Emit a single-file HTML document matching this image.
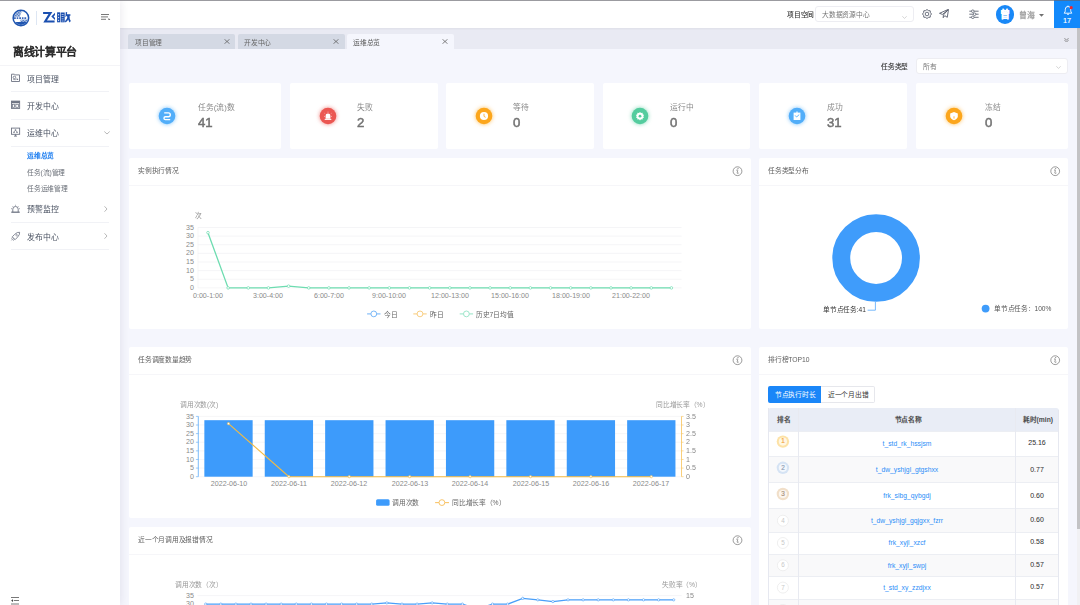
<!DOCTYPE html>
<html lang="zh-CN">
<head>
<meta charset="utf-8">
<style>
*{box-sizing:border-box;margin:0;padding:0}
html,body{width:1080px;height:605px;overflow:hidden;background:#f5f6fd;font-family:"Liberation Sans",sans-serif;color:#555}
.t{position:absolute;white-space:nowrap;line-height:1;transform-origin:0 0}
.r{position:absolute}
</style>
</head>
<body>

<div class="r" style="left:120.00px;top:27.80px;width:960.00px;height:21.10px;background:#e9eaf3;"></div>
<div class="r" style="left:128.40px;top:33.50px;width:107.00px;height:15.40px;background:#d4d9e4;border-radius:2px 2px 0 0"></div>
<div class="t" style="left:134.70px;top:38.73px;font-size:12.000px;color:#666;font-weight:400;transform:scale(0.5625);">项目管理</div>
<svg class="r" style="left:224.0px;top:39.2px;" width="6" height="5" viewBox="0 0 6 5"><path d="M.4 .2L5.6 4.8M5.6 .2L.4 4.8" stroke="#555" stroke-width=".7"/></svg>
<div class="r" style="left:237.50px;top:33.50px;width:107.00px;height:15.40px;background:#d4d9e4;border-radius:2px 2px 0 0"></div>
<div class="t" style="left:243.80px;top:38.73px;font-size:12.000px;color:#666;font-weight:400;transform:scale(0.5625);">开发中心</div>
<svg class="r" style="left:333.1px;top:39.2px;" width="6" height="5" viewBox="0 0 6 5"><path d="M.4 .2L5.6 4.8M5.6 .2L.4 4.8" stroke="#555" stroke-width=".7"/></svg>
<div class="r" style="left:346.70px;top:33.50px;width:107.00px;height:15.40px;background:#f5f6fd;border-radius:2px 2px 0 0"></div>
<div class="t" style="left:353.00px;top:38.73px;font-size:12.000px;color:#555;font-weight:400;transform:scale(0.5625);">运维总览</div>
<svg class="r" style="left:442.29999999999995px;top:39.2px;" width="6" height="5" viewBox="0 0 6 5"><path d="M.4 .2L5.6 4.8M5.6 .2L.4 4.8" stroke="#555" stroke-width=".7"/></svg>
<svg class="r" style="left:1063.6px;top:37.7px;" width="5" height="4.5" viewBox="0 0 5 4.5"><path d="M.4 .4L2.5 1.9 4.6 .4M.4 2.3L2.5 3.8 4.6 2.3" stroke="#707070" stroke-width=".75" fill="none"/></svg>
<div class="t" style="left:880.90px;top:63.42px;font-size:12.000px;color:#333;font-weight:400;transform:scale(0.5625);-webkit-text-stroke:.2px #333">任务类型</div>
<div class="r" style="left:916.10px;top:57.80px;width:151.50px;height:16.20px;background:#fff;border:1px solid #ededf2;border-radius:3px"></div>
<div class="t" style="left:923.00px;top:63.03px;font-size:12.000px;color:#777;font-weight:400;transform:scale(0.5625);">所有</div>
<svg class="r" style="left:1055.8px;top:65.6px;" width="5" height="3" viewBox="0 0 5 3"><path d="M.3 .3L2.5 2.4 4.7 .3" stroke="#bbb" stroke-width=".6" fill="none"/></svg>
<div class="r" style="left:129.20px;top:83.30px;width:152.00px;height:65.50px;background:#fff;border-radius:2px"></div>
<svg class="r" style="left:155.8px;top:105.3px;overflow:visible" width="22" height="22" viewBox="-11 -11 22 22"><circle r="8.3" fill="#52aef9" style="filter:drop-shadow(0 0 2.2px #52aef9bb)"/><path d="M-2.8 -3.1H1.4A1.9 1.9 0 0 1 1.4 0.7H-1.6A1.45 1.45 0 0 0 -1.6 3.6H3.2" stroke="#fff" stroke-width="1.35" fill="none"/></svg>
<div class="t" style="left:197.60px;top:103.70px;font-size:13.867px;color:#8a8a8a;font-weight:400;transform:scale(0.5625);">任务(流)数</div>
<div class="t" style="left:197.80px;top:115.93px;font-size:23.467px;color:#737373;font-weight:400;transform:scale(0.5625);-webkit-text-stroke:.9px #737373">41</div>
<div class="r" style="left:290.00px;top:83.30px;width:147.60px;height:65.50px;background:#fff;border-radius:2px"></div>
<svg class="r" style="left:316.6px;top:105.3px;overflow:visible" width="22" height="22" viewBox="-11 -11 22 22"><circle r="8.3" fill="#eb5752" style="filter:drop-shadow(0 0 2.2px #eb5752bb)"/><path d="M-2.4 -0.2A2.4 2.4 0 0 1 2.4 -0.2V2.8H-2.4Z" fill="#fff"/><path d="M-3.3 3.4H3.3" stroke="#fff" stroke-width="1"/><path d="M0 -4.3V-3.4M-3.4 -2.6L-2.8 -2.1M3.4 -2.6L2.8 -2.1M-4 0.4H-3.2M4 0.4H3.2" stroke="#fff" stroke-width=".6"/></svg>
<div class="t" style="left:357.20px;top:103.70px;font-size:13.867px;color:#8a8a8a;font-weight:400;transform:scale(0.5625);">失败</div>
<div class="t" style="left:357.40px;top:115.93px;font-size:23.467px;color:#737373;font-weight:400;transform:scale(0.5625);-webkit-text-stroke:.9px #737373">2</div>
<div class="r" style="left:445.90px;top:83.30px;width:148.00px;height:65.50px;background:#fff;border-radius:2px"></div>
<svg class="r" style="left:472.5px;top:105.3px;overflow:visible" width="22" height="22" viewBox="-11 -11 22 22"><circle r="8.3" fill="#fca61c" style="filter:drop-shadow(0 0 2.2px #fca61cbb)"/><circle cx="0" cy="0" r="4.1" fill="#fff"/><path d="M0 -2.3V0.4L1.6 1.3" stroke="#fca61c" stroke-width=".8" fill="none"/></svg>
<div class="t" style="left:513.10px;top:103.70px;font-size:13.867px;color:#8a8a8a;font-weight:400;transform:scale(0.5625);">等待</div>
<div class="t" style="left:513.30px;top:115.93px;font-size:23.467px;color:#737373;font-weight:400;transform:scale(0.5625);-webkit-text-stroke:.9px #737373">0</div>
<div class="r" style="left:602.80px;top:83.30px;width:147.60px;height:65.50px;background:#fff;border-radius:2px"></div>
<svg class="r" style="left:629.4px;top:105.3px;overflow:visible" width="22" height="22" viewBox="-11 -11 22 22"><circle r="8.3" fill="#54cc9e" style="filter:drop-shadow(0 0 2.2px #54cc9ebb)"/><path d="M0 -4.1L1 -3 2.6 -3.3 2.7 -1.8 4.1 -1 3.2 0.2 4.1 1.4 2.7 2 2.6 3.5 1 3.3 0 4.4 -1 3.3 -2.6 3.5 -2.7 2 -4.1 1.4 -3.2 0.2 -4.1 -1 -2.7 -1.8 -2.6 -3.3 -1 -3Z" fill="#fff"/><circle cx="0" cy="0.2" r="1.4" fill="#54cc9e"/></svg>
<div class="t" style="left:670.00px;top:103.70px;font-size:13.867px;color:#8a8a8a;font-weight:400;transform:scale(0.5625);">运行中</div>
<div class="t" style="left:670.20px;top:115.93px;font-size:23.467px;color:#737373;font-weight:400;transform:scale(0.5625);-webkit-text-stroke:.9px #737373">0</div>
<div class="r" style="left:759.30px;top:83.30px;width:147.60px;height:65.50px;background:#fff;border-radius:2px"></div>
<svg class="r" style="left:785.9px;top:105.3px;overflow:visible" width="22" height="22" viewBox="-11 -11 22 22"><circle r="8.3" fill="#52aef9" style="filter:drop-shadow(0 0 2.2px #52aef9bb)"/><rect x="-3.4" y="-3.4" width="6.8" height="7.4" fill="#fff"/><path d="M0 -4.5V-2.6" stroke="#fff" stroke-width="1.2"/><path d="M-1.9 -0.6L-0.4 1 2.2 -1.4" stroke="#52aef9" stroke-width=".9" fill="none"/></svg>
<div class="t" style="left:826.50px;top:103.70px;font-size:13.867px;color:#8a8a8a;font-weight:400;transform:scale(0.5625);">成功</div>
<div class="t" style="left:826.70px;top:115.93px;font-size:23.467px;color:#737373;font-weight:400;transform:scale(0.5625);-webkit-text-stroke:.9px #737373">31</div>
<div class="r" style="left:916.10px;top:83.30px;width:152.00px;height:65.50px;background:#fff;border-radius:2px"></div>
<svg class="r" style="left:942.7px;top:105.3px;overflow:visible" width="22" height="22" viewBox="-11 -11 22 22"><circle r="8.3" fill="#fca61c" style="filter:drop-shadow(0 0 2.2px #fca61cbb)"/><path d="M-3.8 -2.6L0 -4 3.8 -2.6V0.2Q3.8 2.8 0 4.3 -3.8 2.8 -3.8 0.2Z" fill="#fff"/><path d="M0 0.3V2.6" stroke="#fca61c" stroke-width=".8"/></svg>
<div class="t" style="left:984.50px;top:103.70px;font-size:13.867px;color:#8a8a8a;font-weight:400;transform:scale(0.5625);">冻结</div>
<div class="t" style="left:984.70px;top:115.93px;font-size:23.467px;color:#737373;font-weight:400;transform:scale(0.5625);-webkit-text-stroke:.9px #737373">0</div>
<div class="r" style="left:129.10px;top:158.00px;width:621.60px;height:170.70px;background:#fff;border-radius:2px"></div>
<div class="r" style="left:129.10px;top:185.20px;width:621.60px;height:0.80px;background:#f6f6f9;"></div>
<div class="t" style="left:137.80px;top:167.43px;font-size:12.000px;color:#606060;font-weight:400;transform:scale(0.5625);">实例执行情况</div>
<div class="r" style="left:759.30px;top:158.00px;width:308.80px;height:170.70px;background:#fff;border-radius:2px"></div>
<div class="r" style="left:759.30px;top:185.20px;width:308.80px;height:0.80px;background:#f6f6f9;"></div>
<div class="t" style="left:768.00px;top:167.43px;font-size:12.000px;color:#606060;font-weight:400;transform:scale(0.5625);">任务类型分布</div>
<div class="r" style="left:129.10px;top:347.00px;width:621.60px;height:170.70px;background:#fff;border-radius:2px"></div>
<div class="r" style="left:129.10px;top:374.20px;width:621.60px;height:0.80px;background:#f6f6f9;"></div>
<div class="t" style="left:137.80px;top:356.43px;font-size:12.000px;color:#606060;font-weight:400;transform:scale(0.5625);">任务调度数量趋势</div>
<div class="r" style="left:759.30px;top:347.00px;width:308.80px;height:300.00px;background:#fff;border-radius:2px"></div>
<div class="r" style="left:759.30px;top:374.20px;width:308.80px;height:0.80px;background:#f6f6f9;"></div>
<div class="t" style="left:768.00px;top:356.43px;font-size:12.000px;color:#606060;font-weight:400;transform:scale(0.5625);">排行榜TOP10</div>
<div class="r" style="left:129.10px;top:527.00px;width:621.60px;height:170.70px;background:#fff;border-radius:2px"></div>
<div class="r" style="left:129.10px;top:554.20px;width:621.60px;height:0.80px;background:#f6f6f9;"></div>
<div class="t" style="left:137.80px;top:536.42px;font-size:12.000px;color:#606060;font-weight:400;transform:scale(0.5625);">近一个月调用及报错情况</div>
<div class="t" style="left:194.10px;top:283.92px;font-size:12.622px;color:#8a8a8a;font-weight:400;transform:scale(0.5625) translateX(-100%);">0</div>
<div class="t" style="left:194.10px;top:275.29px;font-size:12.622px;color:#8a8a8a;font-weight:400;transform:scale(0.5625) translateX(-100%);">5</div>
<div class="t" style="left:194.10px;top:266.66px;font-size:12.622px;color:#8a8a8a;font-weight:400;transform:scale(0.5625) translateX(-100%);">10</div>
<div class="t" style="left:194.10px;top:258.04px;font-size:12.622px;color:#8a8a8a;font-weight:400;transform:scale(0.5625) translateX(-100%);">15</div>
<div class="t" style="left:194.10px;top:249.41px;font-size:12.622px;color:#8a8a8a;font-weight:400;transform:scale(0.5625) translateX(-100%);">20</div>
<div class="t" style="left:194.10px;top:240.78px;font-size:12.622px;color:#8a8a8a;font-weight:400;transform:scale(0.5625) translateX(-100%);">25</div>
<div class="t" style="left:194.10px;top:232.15px;font-size:12.622px;color:#8a8a8a;font-weight:400;transform:scale(0.5625) translateX(-100%);">30</div>
<div class="t" style="left:194.10px;top:223.52px;font-size:12.622px;color:#8a8a8a;font-weight:400;transform:scale(0.5625) translateX(-100%);">35</div>
<div class="t" style="left:195.00px;top:211.82px;font-size:12.000px;color:#8a8a8a;font-weight:400;transform:scale(0.5625);">次</div>
<div class="t" style="left:207.97px;top:291.52px;font-size:12.622px;color:#8a8a8a;font-weight:400;transform:scale(0.5625) translateX(-50%);">0:00-1:00</div>
<div class="t" style="left:268.43px;top:291.52px;font-size:12.622px;color:#8a8a8a;font-weight:400;transform:scale(0.5625) translateX(-50%);">3:00-4:00</div>
<div class="t" style="left:328.88px;top:291.52px;font-size:12.622px;color:#8a8a8a;font-weight:400;transform:scale(0.5625) translateX(-50%);">6:00-7:00</div>
<div class="t" style="left:389.33px;top:291.52px;font-size:12.622px;color:#8a8a8a;font-weight:400;transform:scale(0.5625) translateX(-50%);">9:00-10:00</div>
<div class="t" style="left:449.78px;top:291.52px;font-size:12.622px;color:#8a8a8a;font-weight:400;transform:scale(0.5625) translateX(-50%);">12:00-13:00</div>
<div class="t" style="left:510.23px;top:291.52px;font-size:12.622px;color:#8a8a8a;font-weight:400;transform:scale(0.5625) translateX(-50%);">15:00-16:00</div>
<div class="t" style="left:570.68px;top:291.52px;font-size:12.622px;color:#8a8a8a;font-weight:400;transform:scale(0.5625) translateX(-50%);">18:00-19:00</div>
<div class="t" style="left:631.12px;top:291.52px;font-size:12.622px;color:#8a8a8a;font-weight:400;transform:scale(0.5625) translateX(-50%);">21:00-22:00</div>
<div class="t" style="left:383.70px;top:310.52px;font-size:12.000px;color:#666;font-weight:400;transform:scale(0.5625);">今日</div>
<div class="t" style="left:429.60px;top:310.52px;font-size:12.000px;color:#666;font-weight:400;transform:scale(0.5625);">昨日</div>
<div class="t" style="left:476.30px;top:310.52px;font-size:12.000px;color:#666;font-weight:400;transform:scale(0.5625);">历史7日均值</div>
<div class="t" style="left:822.70px;top:306.10px;font-size:11.733px;color:#333;font-weight:400;transform:scale(0.5625);">单节点任务:41</div>
<div class="t" style="left:994.00px;top:305.10px;font-size:11.733px;color:#555;font-weight:400;transform:scale(0.5625);">单节点任务：100%</div>
<div class="t" style="left:193.90px;top:472.82px;font-size:12.622px;color:#8a8a8a;font-weight:400;transform:scale(0.5625) translateX(-100%);">0</div>
<div class="t" style="left:686.20px;top:472.82px;font-size:12.622px;color:#8a8a8a;font-weight:400;transform:scale(0.5625);">0</div>
<div class="t" style="left:193.90px;top:464.21px;font-size:12.622px;color:#8a8a8a;font-weight:400;transform:scale(0.5625) translateX(-100%);">5</div>
<div class="t" style="left:686.20px;top:464.21px;font-size:12.622px;color:#8a8a8a;font-weight:400;transform:scale(0.5625);">0.5</div>
<div class="t" style="left:193.90px;top:455.59px;font-size:12.622px;color:#8a8a8a;font-weight:400;transform:scale(0.5625) translateX(-100%);">10</div>
<div class="t" style="left:686.20px;top:455.59px;font-size:12.622px;color:#8a8a8a;font-weight:400;transform:scale(0.5625);">1</div>
<div class="t" style="left:193.90px;top:446.98px;font-size:12.622px;color:#8a8a8a;font-weight:400;transform:scale(0.5625) translateX(-100%);">15</div>
<div class="t" style="left:686.20px;top:446.98px;font-size:12.622px;color:#8a8a8a;font-weight:400;transform:scale(0.5625);">1.5</div>
<div class="t" style="left:193.90px;top:438.36px;font-size:12.622px;color:#8a8a8a;font-weight:400;transform:scale(0.5625) translateX(-100%);">20</div>
<div class="t" style="left:686.20px;top:438.36px;font-size:12.622px;color:#8a8a8a;font-weight:400;transform:scale(0.5625);">2</div>
<div class="t" style="left:193.90px;top:429.75px;font-size:12.622px;color:#8a8a8a;font-weight:400;transform:scale(0.5625) translateX(-100%);">25</div>
<div class="t" style="left:686.20px;top:429.75px;font-size:12.622px;color:#8a8a8a;font-weight:400;transform:scale(0.5625);">2.5</div>
<div class="t" style="left:193.90px;top:421.14px;font-size:12.622px;color:#8a8a8a;font-weight:400;transform:scale(0.5625) translateX(-100%);">30</div>
<div class="t" style="left:686.20px;top:421.14px;font-size:12.622px;color:#8a8a8a;font-weight:400;transform:scale(0.5625);">3</div>
<div class="t" style="left:193.90px;top:412.52px;font-size:12.622px;color:#8a8a8a;font-weight:400;transform:scale(0.5625) translateX(-100%);">35</div>
<div class="t" style="left:686.20px;top:412.52px;font-size:12.622px;color:#8a8a8a;font-weight:400;transform:scale(0.5625);">3.5</div>
<div class="t" style="left:179.70px;top:401.43px;font-size:12.000px;color:#999;font-weight:400;transform:scale(0.5625);">调用次数(次)</div>
<div class="t" style="left:655.50px;top:401.43px;font-size:12.000px;color:#999;font-weight:400;transform:scale(0.5625);">同比增长率（%）</div>
<div class="t" style="left:228.50px;top:479.92px;font-size:12.622px;color:#8a8a8a;font-weight:400;transform:scale(0.5625) translateX(-50%);">2022-06-10</div>
<div class="t" style="left:288.90px;top:479.92px;font-size:12.622px;color:#8a8a8a;font-weight:400;transform:scale(0.5625) translateX(-50%);">2022-06-11</div>
<div class="t" style="left:349.30px;top:479.92px;font-size:12.622px;color:#8a8a8a;font-weight:400;transform:scale(0.5625) translateX(-50%);">2022-06-12</div>
<div class="t" style="left:409.70px;top:479.92px;font-size:12.622px;color:#8a8a8a;font-weight:400;transform:scale(0.5625) translateX(-50%);">2022-06-13</div>
<div class="t" style="left:470.10px;top:479.92px;font-size:12.622px;color:#8a8a8a;font-weight:400;transform:scale(0.5625) translateX(-50%);">2022-06-14</div>
<div class="t" style="left:530.50px;top:479.92px;font-size:12.622px;color:#8a8a8a;font-weight:400;transform:scale(0.5625) translateX(-50%);">2022-06-15</div>
<div class="t" style="left:590.90px;top:479.92px;font-size:12.622px;color:#8a8a8a;font-weight:400;transform:scale(0.5625) translateX(-50%);">2022-06-16</div>
<div class="t" style="left:651.30px;top:479.92px;font-size:12.622px;color:#8a8a8a;font-weight:400;transform:scale(0.5625) translateX(-50%);">2022-06-17</div>
<div class="t" style="left:392.40px;top:499.32px;font-size:12.000px;color:#666;font-weight:400;transform:scale(0.5625);">调用次数</div>
<div class="t" style="left:451.80px;top:499.32px;font-size:12.000px;color:#666;font-weight:400;transform:scale(0.5625);">同比增长率（%）</div>
<div class="t" style="left:175.20px;top:581.38px;font-size:12.000px;color:#999;font-weight:400;transform:scale(0.5625);">调用次数（次）</div>
<div class="t" style="left:661.90px;top:581.38px;font-size:12.000px;color:#999;font-weight:400;transform:scale(0.5625);">失败率（%）</div>
<div class="t" style="left:194.00px;top:591.92px;font-size:12.622px;color:#8a8a8a;font-weight:400;transform:scale(0.5625) translateX(-100%);">35</div>
<div class="t" style="left:194.00px;top:600.22px;font-size:12.622px;color:#8a8a8a;font-weight:400;transform:scale(0.5625) translateX(-100%);">30</div>
<div class="t" style="left:686.30px;top:592.32px;font-size:12.622px;color:#8a8a8a;font-weight:400;transform:scale(0.5625);">15</div>
<svg class="r" style="left:0;top:0" width="1080" height="605" viewBox="0 0 1080 605"><circle cx="737.5" cy="171.2" r="4.4" fill="none" stroke="#7a7a7a" stroke-width=".75"/><path d="M736.3 170.29999999999998Q737.8 169.2 737.7 170.6L737.1 173.1Q737.3 173.89999999999998 738.7 173.0" fill="none" stroke="#7a7a7a" stroke-width=".75"/><circle cx="738.0" cy="168.6" r=".55" fill="#7a7a7a"/><circle cx="1055.2" cy="171.2" r="4.4" fill="none" stroke="#7a7a7a" stroke-width=".75"/><path d="M1054.0 170.29999999999998Q1055.5 169.2 1055.4 170.6L1054.8 173.1Q1055.0 173.89999999999998 1056.4 173.0" fill="none" stroke="#7a7a7a" stroke-width=".75"/><circle cx="1055.7" cy="168.6" r=".55" fill="#7a7a7a"/><circle cx="737.5" cy="360.2" r="4.4" fill="none" stroke="#7a7a7a" stroke-width=".75"/><path d="M736.3 359.3Q737.8 358.2 737.7 359.59999999999997L737.1 362.09999999999997Q737.3 362.9 738.7 362.0" fill="none" stroke="#7a7a7a" stroke-width=".75"/><circle cx="738.0" cy="357.59999999999997" r=".55" fill="#7a7a7a"/><circle cx="1055.2" cy="360.2" r="4.4" fill="none" stroke="#7a7a7a" stroke-width=".75"/><path d="M1054.0 359.3Q1055.5 358.2 1055.4 359.59999999999997L1054.8 362.09999999999997Q1055.0 362.9 1056.4 362.0" fill="none" stroke="#7a7a7a" stroke-width=".75"/><circle cx="1055.7" cy="357.59999999999997" r=".55" fill="#7a7a7a"/><circle cx="737.5" cy="540.2" r="4.4" fill="none" stroke="#7a7a7a" stroke-width=".75"/><path d="M736.3 539.3000000000001Q737.8 538.2 737.7 539.6L737.1 542.1Q737.3 542.9000000000001 738.7 542.0" fill="none" stroke="#7a7a7a" stroke-width=".75"/><circle cx="738.0" cy="537.6" r=".55" fill="#7a7a7a"/><line x1="197.9" x2="681.5" y1="287.90" y2="287.90" stroke="#efeff2" stroke-width=".6"/><line x1="197.9" x2="681.5" y1="279.27" y2="279.27" stroke="#efeff2" stroke-width=".6"/><line x1="197.9" x2="681.5" y1="270.64" y2="270.64" stroke="#efeff2" stroke-width=".6"/><line x1="197.9" x2="681.5" y1="262.01" y2="262.01" stroke="#efeff2" stroke-width=".6"/><line x1="197.9" x2="681.5" y1="253.39" y2="253.39" stroke="#efeff2" stroke-width=".6"/><line x1="197.9" x2="681.5" y1="244.76" y2="244.76" stroke="#efeff2" stroke-width=".6"/><line x1="197.9" x2="681.5" y1="236.13" y2="236.13" stroke="#efeff2" stroke-width=".6"/><line x1="197.9" x2="681.5" y1="227.50" y2="227.50" stroke="#efeff2" stroke-width=".6"/><line x1="198" x2="198" y1="227.5" y2="287.9" stroke="#f2f2f4" stroke-width=".6"/><polyline points="207.97,232.68 228.12,287.90 248.28,287.90 268.43,287.90 288.58,286.17 308.73,287.90 328.88,287.90 349.03,287.90 369.18,287.90 389.33,287.90 409.48,287.90 429.62,287.90 449.78,287.90 469.93,287.90 490.08,287.90 510.23,287.90 530.38,287.90 550.53,287.90 570.68,287.90 590.83,287.90 610.98,287.90 631.12,287.90 651.28,287.90 671.43,287.90" fill="none" stroke="#6ddcb0" stroke-width="1.3"/><circle cx="207.97" cy="232.68" r="1.3" fill="#fff" stroke="#6ddcb0" stroke-width=".7"/><circle cx="228.12" cy="287.90" r="1.3" fill="#fff" stroke="#6ddcb0" stroke-width=".7"/><circle cx="248.28" cy="287.90" r="1.3" fill="#fff" stroke="#6ddcb0" stroke-width=".7"/><circle cx="268.43" cy="287.90" r="1.3" fill="#fff" stroke="#6ddcb0" stroke-width=".7"/><circle cx="288.58" cy="286.17" r="1.3" fill="#fff" stroke="#6ddcb0" stroke-width=".7"/><circle cx="308.73" cy="287.90" r="1.3" fill="#fff" stroke="#6ddcb0" stroke-width=".7"/><circle cx="328.88" cy="287.90" r="1.3" fill="#fff" stroke="#6ddcb0" stroke-width=".7"/><circle cx="349.03" cy="287.90" r="1.3" fill="#fff" stroke="#6ddcb0" stroke-width=".7"/><circle cx="369.18" cy="287.90" r="1.3" fill="#fff" stroke="#6ddcb0" stroke-width=".7"/><circle cx="389.33" cy="287.90" r="1.3" fill="#fff" stroke="#6ddcb0" stroke-width=".7"/><circle cx="409.48" cy="287.90" r="1.3" fill="#fff" stroke="#6ddcb0" stroke-width=".7"/><circle cx="429.62" cy="287.90" r="1.3" fill="#fff" stroke="#6ddcb0" stroke-width=".7"/><circle cx="449.78" cy="287.90" r="1.3" fill="#fff" stroke="#6ddcb0" stroke-width=".7"/><circle cx="469.93" cy="287.90" r="1.3" fill="#fff" stroke="#6ddcb0" stroke-width=".7"/><circle cx="490.08" cy="287.90" r="1.3" fill="#fff" stroke="#6ddcb0" stroke-width=".7"/><circle cx="510.23" cy="287.90" r="1.3" fill="#fff" stroke="#6ddcb0" stroke-width=".7"/><circle cx="530.38" cy="287.90" r="1.3" fill="#fff" stroke="#6ddcb0" stroke-width=".7"/><circle cx="550.53" cy="287.90" r="1.3" fill="#fff" stroke="#6ddcb0" stroke-width=".7"/><circle cx="570.68" cy="287.90" r="1.3" fill="#fff" stroke="#6ddcb0" stroke-width=".7"/><circle cx="590.83" cy="287.90" r="1.3" fill="#fff" stroke="#6ddcb0" stroke-width=".7"/><circle cx="610.98" cy="287.90" r="1.3" fill="#fff" stroke="#6ddcb0" stroke-width=".7"/><circle cx="631.12" cy="287.90" r="1.3" fill="#fff" stroke="#6ddcb0" stroke-width=".7"/><circle cx="651.28" cy="287.90" r="1.3" fill="#fff" stroke="#6ddcb0" stroke-width=".7"/><circle cx="671.43" cy="287.90" r="1.3" fill="#fff" stroke="#6ddcb0" stroke-width=".7"/><line x1="367.1" x2="380.5" y1="313.9" y2="313.9" stroke="#7ab8f8" stroke-width="1.1"/><circle cx="373.8" cy="313.9" r="2.9" fill="#fff" stroke="#7ab8f8" stroke-width="1"/><line x1="413.3" x2="426.7" y1="313.9" y2="313.9" stroke="#f9cf84" stroke-width="1.1"/><circle cx="420" cy="313.9" r="2.9" fill="#fff" stroke="#f9cf84" stroke-width="1"/><line x1="459.7" x2="473.09999999999997" y1="313.9" y2="313.9" stroke="#9ee6cb" stroke-width="1.1"/><circle cx="466.4" cy="313.9" r="2.9" fill="#fff" stroke="#9ee6cb" stroke-width="1"/><circle cx="876.1" cy="258" r="34.85" fill="none" stroke="#3f9cfb" stroke-width="17.9"/><path d="M875.4 302V310.2H867.6" fill="none" stroke="#3f9cfb" stroke-width=".7"/><circle cx="985.6" cy="308.6" r="3.9" fill="#3f9cfb"/><line x1="198.3" x2="681.5" y1="476.70" y2="476.70" stroke="#f0f0f2" stroke-width=".6"/><line x1="195.9" x2="198.3" y1="476.70" y2="476.70" stroke="#5aa9f8" stroke-width=".6"/><line x1="681.5" x2="683.6" y1="476.70" y2="476.70" stroke="#f7c35a" stroke-width=".6"/><line x1="198.3" x2="681.5" y1="468.09" y2="468.09" stroke="#f0f0f2" stroke-width=".6"/><line x1="195.9" x2="198.3" y1="468.09" y2="468.09" stroke="#5aa9f8" stroke-width=".6"/><line x1="681.5" x2="683.6" y1="468.09" y2="468.09" stroke="#f7c35a" stroke-width=".6"/><line x1="198.3" x2="681.5" y1="459.47" y2="459.47" stroke="#f0f0f2" stroke-width=".6"/><line x1="195.9" x2="198.3" y1="459.47" y2="459.47" stroke="#5aa9f8" stroke-width=".6"/><line x1="681.5" x2="683.6" y1="459.47" y2="459.47" stroke="#f7c35a" stroke-width=".6"/><line x1="198.3" x2="681.5" y1="450.86" y2="450.86" stroke="#f0f0f2" stroke-width=".6"/><line x1="195.9" x2="198.3" y1="450.86" y2="450.86" stroke="#5aa9f8" stroke-width=".6"/><line x1="681.5" x2="683.6" y1="450.86" y2="450.86" stroke="#f7c35a" stroke-width=".6"/><line x1="198.3" x2="681.5" y1="442.24" y2="442.24" stroke="#f0f0f2" stroke-width=".6"/><line x1="195.9" x2="198.3" y1="442.24" y2="442.24" stroke="#5aa9f8" stroke-width=".6"/><line x1="681.5" x2="683.6" y1="442.24" y2="442.24" stroke="#f7c35a" stroke-width=".6"/><line x1="198.3" x2="681.5" y1="433.63" y2="433.63" stroke="#f0f0f2" stroke-width=".6"/><line x1="195.9" x2="198.3" y1="433.63" y2="433.63" stroke="#5aa9f8" stroke-width=".6"/><line x1="681.5" x2="683.6" y1="433.63" y2="433.63" stroke="#f7c35a" stroke-width=".6"/><line x1="198.3" x2="681.5" y1="425.01" y2="425.01" stroke="#f0f0f2" stroke-width=".6"/><line x1="195.9" x2="198.3" y1="425.01" y2="425.01" stroke="#5aa9f8" stroke-width=".6"/><line x1="681.5" x2="683.6" y1="425.01" y2="425.01" stroke="#f7c35a" stroke-width=".6"/><line x1="198.3" x2="681.5" y1="416.40" y2="416.40" stroke="#f0f0f2" stroke-width=".6"/><line x1="195.9" x2="198.3" y1="416.40" y2="416.40" stroke="#5aa9f8" stroke-width=".6"/><line x1="681.5" x2="683.6" y1="416.40" y2="416.40" stroke="#f7c35a" stroke-width=".6"/><line x1="198.3" x2="198.3" y1="416.4" y2="476.7" stroke="#5aa9f8" stroke-width=".8"/><line x1="681.5" x2="681.5" y1="416.4" y2="476.7" stroke="#f7c35a" stroke-width=".8"/><rect x="204.35" y="420.19" width="48.3" height="56.51" fill="#3d9bfb"/><rect x="264.75" y="420.19" width="48.3" height="56.51" fill="#3d9bfb"/><rect x="325.15" y="420.19" width="48.3" height="56.51" fill="#3d9bfb"/><rect x="385.55" y="420.19" width="48.3" height="56.51" fill="#3d9bfb"/><rect x="445.95" y="420.19" width="48.3" height="56.51" fill="#3d9bfb"/><rect x="506.35" y="420.19" width="48.3" height="56.51" fill="#3d9bfb"/><rect x="566.75" y="420.19" width="48.3" height="56.51" fill="#3d9bfb"/><rect x="627.15" y="420.19" width="48.3" height="56.51" fill="#3d9bfb"/><polyline points="228.50,423.64 288.90,476.70 349.30,476.70 409.70,476.70 470.10,476.70 530.50,476.70 590.90,476.70 651.30,476.70" fill="none" stroke="#f5bb40" stroke-width="1.1"/><circle cx="228.50" cy="423.64" r="1.15" fill="#fff" stroke="#f5bb40" stroke-width=".6"/><circle cx="288.90" cy="476.70" r="1.15" fill="#fff" stroke="#f5bb40" stroke-width=".6"/><circle cx="349.30" cy="476.70" r="1.15" fill="#fff" stroke="#f5bb40" stroke-width=".6"/><circle cx="409.70" cy="476.70" r="1.15" fill="#fff" stroke="#f5bb40" stroke-width=".6"/><circle cx="470.10" cy="476.70" r="1.15" fill="#fff" stroke="#f5bb40" stroke-width=".6"/><circle cx="530.50" cy="476.70" r="1.15" fill="#fff" stroke="#f5bb40" stroke-width=".6"/><circle cx="590.90" cy="476.70" r="1.15" fill="#fff" stroke="#f5bb40" stroke-width=".6"/><circle cx="651.30" cy="476.70" r="1.15" fill="#fff" stroke="#f5bb40" stroke-width=".6"/><rect x="376.1" y="499.3" width="13.5" height="6.5" rx="1.5" fill="#3d9bfb"/><line x1="435.1" x2="449" y1="502.6" y2="502.6" stroke="#f9c56a" stroke-width="1.1"/><circle cx="441.9" cy="502.6" r="2.9" fill="#fff" stroke="#f9c56a" stroke-width="1"/><line x1="197.4" x2="681.7" y1="595.6" y2="595.6" stroke="#efeff2" stroke-width=".6"/><polyline points="205.70,604.10 220.80,604.10 235.89,604.10 250.99,604.10 266.09,604.10 281.18,604.10 296.28,604.10 311.38,604.10 326.47,604.10 341.57,604.10 356.67,604.10 371.76,604.10 386.86,602.91 401.96,604.10 417.05,604.10 432.15,602.91 447.25,604.10 462.35,604.10 477.44,609.20 492.54,604.10 507.64,604.10 522.73,598.32 537.83,599.85 552.93,601.55 568.02,599.85 583.12,599.85 598.22,599.85 613.31,599.85 628.41,599.85 643.51,599.85 658.60,599.85 673.70,599.85" fill="none" stroke="#4a9ff9" stroke-width="1.35"/><circle cx="205.70" cy="604.10" r="1.15" fill="#fff" stroke="#4a9ff9" stroke-width=".6"/><circle cx="220.80" cy="604.10" r="1.15" fill="#fff" stroke="#4a9ff9" stroke-width=".6"/><circle cx="235.89" cy="604.10" r="1.15" fill="#fff" stroke="#4a9ff9" stroke-width=".6"/><circle cx="250.99" cy="604.10" r="1.15" fill="#fff" stroke="#4a9ff9" stroke-width=".6"/><circle cx="266.09" cy="604.10" r="1.15" fill="#fff" stroke="#4a9ff9" stroke-width=".6"/><circle cx="281.18" cy="604.10" r="1.15" fill="#fff" stroke="#4a9ff9" stroke-width=".6"/><circle cx="296.28" cy="604.10" r="1.15" fill="#fff" stroke="#4a9ff9" stroke-width=".6"/><circle cx="311.38" cy="604.10" r="1.15" fill="#fff" stroke="#4a9ff9" stroke-width=".6"/><circle cx="326.47" cy="604.10" r="1.15" fill="#fff" stroke="#4a9ff9" stroke-width=".6"/><circle cx="341.57" cy="604.10" r="1.15" fill="#fff" stroke="#4a9ff9" stroke-width=".6"/><circle cx="356.67" cy="604.10" r="1.15" fill="#fff" stroke="#4a9ff9" stroke-width=".6"/><circle cx="371.76" cy="604.10" r="1.15" fill="#fff" stroke="#4a9ff9" stroke-width=".6"/><circle cx="386.86" cy="602.91" r="1.15" fill="#fff" stroke="#4a9ff9" stroke-width=".6"/><circle cx="401.96" cy="604.10" r="1.15" fill="#fff" stroke="#4a9ff9" stroke-width=".6"/><circle cx="417.05" cy="604.10" r="1.15" fill="#fff" stroke="#4a9ff9" stroke-width=".6"/><circle cx="432.15" cy="602.91" r="1.15" fill="#fff" stroke="#4a9ff9" stroke-width=".6"/><circle cx="447.25" cy="604.10" r="1.15" fill="#fff" stroke="#4a9ff9" stroke-width=".6"/><circle cx="462.35" cy="604.10" r="1.15" fill="#fff" stroke="#4a9ff9" stroke-width=".6"/><circle cx="477.44" cy="609.20" r="1.15" fill="#fff" stroke="#4a9ff9" stroke-width=".6"/><circle cx="492.54" cy="604.10" r="1.15" fill="#fff" stroke="#4a9ff9" stroke-width=".6"/><circle cx="507.64" cy="604.10" r="1.15" fill="#fff" stroke="#4a9ff9" stroke-width=".6"/><circle cx="522.73" cy="598.32" r="1.15" fill="#fff" stroke="#4a9ff9" stroke-width=".6"/><circle cx="537.83" cy="599.85" r="1.15" fill="#fff" stroke="#4a9ff9" stroke-width=".6"/><circle cx="552.93" cy="601.55" r="1.15" fill="#fff" stroke="#4a9ff9" stroke-width=".6"/><circle cx="568.02" cy="599.85" r="1.15" fill="#fff" stroke="#4a9ff9" stroke-width=".6"/><circle cx="583.12" cy="599.85" r="1.15" fill="#fff" stroke="#4a9ff9" stroke-width=".6"/><circle cx="598.22" cy="599.85" r="1.15" fill="#fff" stroke="#4a9ff9" stroke-width=".6"/><circle cx="613.31" cy="599.85" r="1.15" fill="#fff" stroke="#4a9ff9" stroke-width=".6"/><circle cx="628.41" cy="599.85" r="1.15" fill="#fff" stroke="#4a9ff9" stroke-width=".6"/><circle cx="643.51" cy="599.85" r="1.15" fill="#fff" stroke="#4a9ff9" stroke-width=".6"/><circle cx="658.60" cy="599.85" r="1.15" fill="#fff" stroke="#4a9ff9" stroke-width=".6"/><circle cx="673.70" cy="599.85" r="1.15" fill="#fff" stroke="#4a9ff9" stroke-width=".6"/></svg>
<div class="r" style="left:768.20px;top:386.30px;width:52.90px;height:16.40px;background:#1a86f8;border-radius:2px 0 0 2px"></div>
<div class="t" style="left:794.65px;top:391.43px;font-size:12.000px;color:#fff;font-weight:400;transform:scale(0.5625) translateX(-50%);">节点执行时长</div>
<div class="r" style="left:821.10px;top:386.30px;width:53.60px;height:16.40px;background:#fff;border:1px solid #e6e7ec;border-left:none;border-radius:0 2px 2px 0"></div>
<div class="t" style="left:847.90px;top:391.43px;font-size:12.000px;color:#333;font-weight:400;transform:scale(0.5625) translateX(-50%);">近一个月出错</div>
<div class="r" style="left:768.20px;top:408.30px;width:290.60px;height:22.30px;background:#e9edf6;border-radius:3px 3px 0 0"></div>
<div class="r" style="left:768.20px;top:430.60px;width:290.60px;height:25.40px;background:#fff;"></div>
<div class="r" style="left:768.20px;top:430.60px;width:290.60px;height:0.80px;background:#eceef3;"></div>
<div class="r" style="left:768.20px;top:456.00px;width:290.60px;height:26.30px;background:#f9f9fa;"></div>
<div class="r" style="left:768.20px;top:456.00px;width:290.60px;height:0.80px;background:#eceef3;"></div>
<div class="r" style="left:768.20px;top:482.30px;width:290.60px;height:26.00px;background:#fff;"></div>
<div class="r" style="left:768.20px;top:482.30px;width:290.60px;height:0.80px;background:#eceef3;"></div>
<div class="r" style="left:768.20px;top:508.30px;width:290.60px;height:23.60px;background:#f9f9fa;"></div>
<div class="r" style="left:768.20px;top:508.30px;width:290.60px;height:0.80px;background:#eceef3;"></div>
<div class="r" style="left:768.20px;top:531.90px;width:290.60px;height:22.00px;background:#fff;"></div>
<div class="r" style="left:768.20px;top:531.90px;width:290.60px;height:0.80px;background:#eceef3;"></div>
<div class="r" style="left:768.20px;top:553.90px;width:290.60px;height:22.50px;background:#f9f9fa;"></div>
<div class="r" style="left:768.20px;top:553.90px;width:290.60px;height:0.80px;background:#eceef3;"></div>
<div class="r" style="left:768.20px;top:576.40px;width:290.60px;height:22.40px;background:#fff;"></div>
<div class="r" style="left:768.20px;top:576.40px;width:290.60px;height:0.80px;background:#eceef3;"></div>
<div class="r" style="left:768.20px;top:598.80px;width:290.60px;height:23.20px;background:#f9f9fa;"></div>
<div class="r" style="left:768.20px;top:598.80px;width:290.60px;height:0.80px;background:#eceef3;"></div>
<div class="r" style="left:768.20px;top:408.30px;width:0.80px;height:200.00px;background:#e6e8f0;"></div>
<div class="r" style="left:1058.00px;top:410.30px;width:0.80px;height:200.00px;background:#e6e8f0;"></div>
<div class="r" style="left:798.30px;top:408.30px;width:0.80px;height:200.00px;background:#e8eaf1;"></div>
<div class="r" style="left:1015.30px;top:408.30px;width:0.80px;height:200.00px;background:#e8eaf1;"></div>
<div class="t" style="left:783.80px;top:416.43px;font-size:12.000px;color:#4a4a4a;font-weight:700;transform:scale(0.5625) translateX(-50%);">排名</div>
<div class="t" style="left:908.00px;top:416.23px;font-size:12.000px;color:#4a4a4a;font-weight:700;transform:scale(0.5625) translateX(-50%);">节点名称</div>
<div class="t" style="left:1037.90px;top:416.43px;font-size:12.000px;color:#4a4a4a;font-weight:700;transform:scale(0.5625) translateX(-50%);">耗时(min)</div>
<svg class="r" style="left:0;top:0" width="1080" height="605" viewBox="0 0 1080 605"><circle cx="782.9" cy="441.6" r="6.2" fill="#fde2a6"/><circle cx="782.9" cy="441.6" r="4.1" fill="#fff7e3"/><circle cx="782.9" cy="467.8" r="6.2" fill="#d5e3f4"/><circle cx="782.9" cy="467.8" r="4.1" fill="#f3f7fc"/><circle cx="782.9" cy="494.0" r="6.2" fill="#f1dfc9"/><circle cx="782.9" cy="494.0" r="4.1" fill="#fcf6ef"/><circle cx="782.9" cy="520.7" r="5.5" fill="#fff" stroke="#e9e9e9" stroke-width=".75"/><circle cx="782.9" cy="543.0" r="5.5" fill="#fff" stroke="#e9e9e9" stroke-width=".75"/><circle cx="782.9" cy="565.3" r="5.5" fill="#fff" stroke="#e9e9e9" stroke-width=".75"/><circle cx="782.9" cy="587.6" r="5.5" fill="#fff" stroke="#e9e9e9" stroke-width=".75"/><circle cx="782.9" cy="609.9" r="5.5" fill="#fff" stroke="#e9e9e9" stroke-width=".75"/></svg>
<div class="t" style="left:782.90px;top:438.46px;font-size:11.378px;color:#f3a33c;font-weight:400;transform:scale(0.5625) translateX(-50%);-webkit-text-stroke:.3px #f3a33c">1</div>
<div class="t" style="left:907.00px;top:440.19px;font-size:12.000px;color:#2c8ef8;font-weight:400;transform:scale(0.5625) translateX(-50%);">t_std_rk_hssjsm</div>
<div class="t" style="left:1037.10px;top:439.47px;font-size:12.444px;color:#333;font-weight:400;transform:scale(0.5625) translateX(-50%);-webkit-text-stroke:.08px #333">25.16</div>
<div class="t" style="left:782.90px;top:464.66px;font-size:11.378px;color:#8d9db4;font-weight:400;transform:scale(0.5625) translateX(-50%);-webkit-text-stroke:.3px #8d9db4">2</div>
<div class="t" style="left:907.00px;top:466.29px;font-size:12.000px;color:#2c8ef8;font-weight:400;transform:scale(0.5625) translateX(-50%);">t_dw_yshjgl_gtgshxx</div>
<div class="t" style="left:1037.10px;top:465.57px;font-size:12.444px;color:#333;font-weight:400;transform:scale(0.5625) translateX(-50%);-webkit-text-stroke:.08px #333">0.77</div>
<div class="t" style="left:782.90px;top:490.86px;font-size:11.378px;color:#a8917a;font-weight:400;transform:scale(0.5625) translateX(-50%);-webkit-text-stroke:.3px #a8917a">3</div>
<div class="t" style="left:907.00px;top:492.49px;font-size:12.000px;color:#2c8ef8;font-weight:400;transform:scale(0.5625) translateX(-50%);">frk_slbg_qybgdj</div>
<div class="t" style="left:1037.10px;top:491.77px;font-size:12.444px;color:#333;font-weight:400;transform:scale(0.5625) translateX(-50%);-webkit-text-stroke:.08px #333">0.60</div>
<div class="t" style="left:782.90px;top:517.61px;font-size:11.200px;color:#c8c8c8;font-weight:400;transform:scale(0.5625) translateX(-50%);">4</div>
<div class="t" style="left:907.00px;top:516.89px;font-size:12.000px;color:#2c8ef8;font-weight:400;transform:scale(0.5625) translateX(-50%);">t_dw_yshjgl_gqjgxx_fzrr</div>
<div class="t" style="left:1037.10px;top:516.17px;font-size:12.444px;color:#333;font-weight:400;transform:scale(0.5625) translateX(-50%);-webkit-text-stroke:.08px #333">0.60</div>
<div class="t" style="left:782.90px;top:539.91px;font-size:11.200px;color:#c8c8c8;font-weight:400;transform:scale(0.5625) translateX(-50%);">5</div>
<div class="t" style="left:907.00px;top:539.09px;font-size:12.000px;color:#2c8ef8;font-weight:400;transform:scale(0.5625) translateX(-50%);">frk_xyjl_xzcf</div>
<div class="t" style="left:1037.10px;top:538.37px;font-size:12.444px;color:#333;font-weight:400;transform:scale(0.5625) translateX(-50%);-webkit-text-stroke:.08px #333">0.58</div>
<div class="t" style="left:782.90px;top:562.21px;font-size:11.200px;color:#c8c8c8;font-weight:400;transform:scale(0.5625) translateX(-50%);">6</div>
<div class="t" style="left:907.00px;top:561.69px;font-size:12.000px;color:#2c8ef8;font-weight:400;transform:scale(0.5625) translateX(-50%);">frk_xyjl_swpj</div>
<div class="t" style="left:1037.10px;top:560.97px;font-size:12.444px;color:#333;font-weight:400;transform:scale(0.5625) translateX(-50%);-webkit-text-stroke:.08px #333">0.57</div>
<div class="t" style="left:782.90px;top:584.51px;font-size:11.200px;color:#c8c8c8;font-weight:400;transform:scale(0.5625) translateX(-50%);">7</div>
<div class="t" style="left:907.00px;top:583.69px;font-size:12.000px;color:#2c8ef8;font-weight:400;transform:scale(0.5625) translateX(-50%);">t_std_xy_zzdjxx</div>
<div class="t" style="left:1037.10px;top:582.97px;font-size:12.444px;color:#333;font-weight:400;transform:scale(0.5625) translateX(-50%);-webkit-text-stroke:.08px #333">0.57</div>
<div class="t" style="left:782.90px;top:606.81px;font-size:11.200px;color:#c8c8c8;font-weight:400;transform:scale(0.5625) translateX(-50%);">8</div>
<div class="r" style="left:1077.00px;top:27.80px;width:3.00px;height:577.00px;background:#f1f1f4;"></div>
<div class="r" style="left:1077.00px;top:27.80px;width:3.00px;height:501.00px;background:#c3c3c5;"></div>
<div class="r" style="left:120.00px;top:0.00px;width:960.00px;height:27.80px;background:#fff;box-shadow:0 1px 2px rgba(0,0,0,.05)"></div>
<div class="t" style="left:787.20px;top:11.32px;font-size:12.000px;color:#333;font-weight:400;transform:scale(0.5625);-webkit-text-stroke:.2px #333">项目空间</div>
<div class="r" style="left:815.40px;top:6.25px;width:99.00px;height:15.75px;background:#fff;border:1px solid #ededf2;border-radius:3px"></div>
<div class="t" style="left:822.40px;top:11.22px;font-size:12.000px;color:#777;font-weight:400;transform:scale(0.5625);">大数据资源中心</div>
<svg class="r" style="left:901.8px;top:15.5px;" width="5" height="3" viewBox="0 0 5 3"><path d="M.3 .3L2.5 2.4 4.7 .3" stroke="#bbb" stroke-width=".6" fill="none"/></svg>
<svg class="r" style="left:921.5px;top:9px;" width="10" height="10" viewBox="0 0 10 10"><path d="M5 .5L6.4 1.6 8.2 1.8 8.4 3.6 9.5 5 8.4 6.4 8.2 8.2 6.4 8.4 5 9.5 3.6 8.4 1.8 8.2 1.6 6.4 .5 5 1.6 3.6 1.8 1.8 3.6 1.6Z" fill="none" stroke="#4b5262" stroke-width=".85"/><circle cx="5" cy="5" r="1.8" fill="none" stroke="#4b5262" stroke-width=".8"/></svg>
<svg class="r" style="left:939px;top:9.4px;" width="10" height="9" viewBox="0 0 10 9"><path d="M9.5 .3L.5 4.3 3.5 5.4 8.8 1 4.4 6 4.2 8.7 5.8 6.7 8.3 8.3Z" fill="none" stroke="#4b5262" stroke-width=".85" stroke-linejoin="round"/></svg>
<svg class="r" style="left:969px;top:9px;" width="10" height="10" viewBox="0 0 10 10"><path d="M.3 2.2H9.6M.3 5.2H9.6M.3 8.3H9.6" stroke="#4b5262" stroke-width=".8"/><circle cx="3.8" cy="2.2" r="1.3" fill="#fff" stroke="#4b5262" stroke-width=".7"/><circle cx="5.6" cy="5.2" r="1.3" fill="#fff" stroke="#4b5262" stroke-width=".7"/><circle cx="3.8" cy="8.3" r="1.3" fill="#fff" stroke="#4b5262" stroke-width=".7"/></svg>
<div class="r" style="left:995.80px;top:5.15px;width:18.55px;height:18.55px;background:#1988f7;border-radius:50%"></div>
<div class="t" style="left:1005.05px;top:10.00px;font-size:17.778px;color:#fff;font-weight:700;transform:scale(0.5625) translateX(-50%);-webkit-text-stroke:.4px #fff">曾</div>
<div class="t" style="left:1019.30px;top:10.51px;font-size:14.000px;color:#a3a3a3;font-weight:700;transform:scale(0.5625);">曾海</div>
<svg class="r" style="left:1039.2px;top:14px;" width="5" height="3" viewBox="0 0 5 3"><path d="M0 0H5L2.5 2.8Z" fill="#707070"/></svg>
<div class="r" style="left:1054.20px;top:0.00px;width:25.80px;height:27.80px;background:#1289fb;"></div>
<svg class="r" style="left:1062.6px;top:4.5px;" width="10" height="10" viewBox="0 0 10 10"><path d="M1.2 8.2Q2.3 7 2.3 5.5V4.2A2.7 2.7 0 0 1 7.7 4.2V5.5Q7.7 7 8.8 8.2Z" fill="none" stroke="#fff" stroke-width=".9" stroke-linejoin="round"/><path d="M4 9Q5 10 6 9" stroke="#fff" stroke-width=".9" fill="none"/><circle cx="5" cy="1.1" r=".6" fill="#fff"/><circle cx="8.2" cy="2.7" r="1.6" fill="#f2262c"/></svg>
<div class="t" style="left:1067.20px;top:17.27px;font-size:13.156px;color:#fff;font-weight:400;transform:scale(0.5625) translateX(-50%);-webkit-text-stroke:.25px #fff">17</div>
<div class="r" style="left:0.00px;top:0.00px;width:120.00px;height:605.00px;background:#fff;box-shadow:1px 0 8px rgba(40,20,70,.085)"></div>
<svg class="r" style="left:11.5px;top:8.5px;" width="18" height="18" viewBox="0 0 18 18"><defs><pattern id="chk" width="1.5" height="1.5" patternUnits="userSpaceOnUse"><rect width=".8" height=".8" fill="#1f55b0"/><rect x=".75" y=".75" width=".8" height=".8" fill="#1f55b0"/></pattern><clipPath id="lc"><circle cx="8.9" cy="8.9" r="7.0"/></clipPath></defs>
<circle cx="8.9" cy="8.9" r="8.5" fill="#1f55b0"/>
<g clip-path="url(#lc)">
<rect width="18" height="18" fill="#fff"/>
<path d="M0 0H11L8.5 5.2 8 7.8H0Z" fill="url(#chk)"/>
<path d="M2 8.2h1.8v1.8H2zM4.7 8.2h1.6v1.8H4.7zM7.2 8.2h1.8v1.8H7.2zM9.9 8.2h1.6v1.8H9.9zM12.4 8.2h1.8v1.8h-1.8z" fill="#3d68ba"/>
<path d="M8.5 10.6H18V15H8.5Z" fill="url(#chk)"/>
<path d="M0 13.4Q9 12.4 18 13V18H0Z" fill="#1f55b0"/>
</g></svg>
<div class="r" style="left:35.50px;top:10.50px;width:1.00px;height:14.00px;background:#dde6f3;"></div>
<svg class="r" style="left:0px;top:0px;" width="80" height="30" viewBox="0 0 80 30"><g fill="#1a4fb0"><path d="M43.1 11.9H52.4L47 20.4H54.6V22.4H43.3L48.5 14.1H43.1Z"/><path d="M55 12.8L51.3 16.6 55 20 55 17.9 53.6 16.6 55 15Z"/>
<path d="M57.1 12.3H60V22.3H57.1Z"/><path d="M60.6 12.5H64.7V22.3H60.6Z"/>
<path d="M65.8 12.1L67.2 12.3 66.9 14.2H70.4V15.8H69.6Q69.3 18.8 70.8 21.1L69.6 22.4Q68.7 21 68.3 19.6 67.5 21.3 65.6 22.5L64.9 21.3Q67 19.6 67.4 17 66.9 16 66.4 15.8 66 16.8 65.4 17.3Z"/></g>
<g fill="#fff"><rect x="58.2" y="14.1" width=".9" height="1.3"/><rect x="58.2" y="16.9" width=".9" height="1.3"/><rect x="58.2" y="19.8" width=".9" height="1.3"/>
<rect x="61.6" y="14.2" width="2" height=".6"/><rect x="61.6" y="16.4" width="2" height=".6"/><rect x="61.6" y="18.6" width="2" height=".6"/><rect x="61.6" y="20.7" width="2" height=".6"/></g></svg>
<svg class="r" style="left:100.5px;top:13.5px;" width="10" height="6" viewBox="0 0 10 6"><path d="M0 .5H8M0 2.9H7M0 5.3H5" stroke="#555" stroke-width=".8"/><path d="M7.5 4.2L9.3 5.4 7.5 6z" fill="#333"/></svg>
<div class="t" style="left:12.50px;top:46.55px;font-size:19.378px;color:#2e2e2e;font-weight:700;transform:scale(0.5625);-webkit-text-stroke:.15px #2e2e2e">离线计算平台</div>
<div class="r" style="left:0.00px;top:64.50px;width:120.00px;height:1.00px;background:#f4f4f7;"></div>
<svg class="r" style="left:11px;top:74.0px;overflow:visible" width="10" height="10" viewBox="0 0 10 10"><path d="M.5 7.5V.2H3.4L4.1 .9H8.5V7.5Z" fill="none" stroke="#6e7483" stroke-width=".9" stroke-linejoin="round"/><circle cx="3.4" cy="3.4" r="1.3" fill="none" stroke="#6e7483" stroke-width=".85"/><path d="M2.2 5.6Q4.8 6.2 6.3 4.6" fill="none" stroke="#6e7483" stroke-width=".7"/><circle cx="6.6" cy="5.4" r=".6" fill="#6e7483"/></svg>
<div class="t" style="left:27.40px;top:74.66px;font-size:14.000px;color:#485060;font-weight:400;transform:scale(0.5625);">项目管理</div>
<div class="r" style="left:11.00px;top:91.25px;width:98.00px;height:0.80px;background:#f1f2f6;"></div>
<svg class="r" style="left:11px;top:101.4px;overflow:visible" width="10" height="10" viewBox="0 0 10 10"><rect x=".45" y=".1" width="8.2" height="7.3" fill="none" stroke="#6e7483" stroke-width=".9"/><rect x=".45" y=".1" width="8.2" height="2.1" fill="#6e7483"/><rect x="1.6" y="3.3" width="2" height="3" fill="none" stroke="#6e7483" stroke-width=".75"/><rect x="4.8" y="3.3" width="2.6" height="3" fill="none" stroke="#6e7483" stroke-width=".75"/></svg>
<div class="t" style="left:27.40px;top:102.06px;font-size:14.000px;color:#485060;font-weight:400;transform:scale(0.5625);">开发中心</div>
<div class="r" style="left:11.00px;top:119.30px;width:98.00px;height:0.80px;background:#f1f2f6;"></div>
<svg class="r" style="left:11px;top:128.4px;overflow:visible" width="10" height="10" viewBox="0 0 10 10"><rect x=".45" y=".1" width="8.2" height="6.2" fill="none" stroke="#6e7483" stroke-width=".9"/><path d="M3 8.1H6M4.5 6.3V8.1" stroke="#6e7483" stroke-width=".9"/><circle cx="4.5" cy="2" r=".8" fill="#6e7483"/><circle cx="3" cy="4.2" r=".8" fill="#6e7483"/><circle cx="6" cy="4.2" r=".8" fill="#6e7483"/><path d="M4.5 2L3 4.2M4.5 2L6 4.2" stroke="#6e7483" stroke-width=".5"/></svg>
<div class="t" style="left:27.40px;top:129.06px;font-size:14.000px;color:#485060;font-weight:400;transform:scale(0.5625);">运维中心</div>
<div class="r" style="left:11.00px;top:146.40px;width:98.00px;height:0.80px;background:#f1f2f6;"></div>
<svg class="r" style="left:103.5px;top:131.0px;" width="6" height="4" viewBox="0 0 6 4"><path d="M.3 .5L3 3 5.7 .5" stroke="#999" stroke-width=".7" fill="none"/></svg>
<svg class="r" style="left:11px;top:204.65px;overflow:visible" width="10" height="10" viewBox="0 0 10 10"><path d="M1.8 7V4.2A2.7 2.7 0 0 1 7.2 4.2V7" fill="none" stroke="#6e7483" stroke-width=".9"/><path d="M.3 7.2H8.7" stroke="#6e7483" stroke-width="1.3"/><path d="M4.5 -.2V.7M1.3 1.1L1.9 1.7M7.7 1.1L7.1 1.7M0 3.7H.9M9 3.7H8.1" stroke="#6e7483" stroke-width=".7"/></svg>
<div class="t" style="left:27.40px;top:205.31px;font-size:14.000px;color:#485060;font-weight:400;transform:scale(0.5625);">预警监控</div>
<div class="r" style="left:11.00px;top:222.20px;width:98.00px;height:0.80px;background:#f1f2f6;"></div>
<svg class="r" style="left:104px;top:206.25px;" width="4" height="6" viewBox="0 0 4 6"><path d="M.5 .3L3 3 .5 5.7" stroke="#999" stroke-width=".7" fill="none"/></svg>
<svg class="r" style="left:11px;top:231.85px;overflow:visible" width="10" height="10" viewBox="0 0 10 10"><path d="M2.5 6.4L1.4 4.7 3.6 2.4Q6.4 -.2 8.6 .3 9.1 2.4 6.5 5.2L4.3 7.5Z" fill="none" stroke="#6e7483" stroke-width=".85" stroke-linejoin="round"/><circle cx="5.6" cy="3.1" r=".8" fill="none" stroke="#6e7483" stroke-width=".6"/><path d="M2.2 6.5L.5 8.3M1.4 5.6L.3 6.4M3.2 7.3L2.4 8.6" stroke="#6e7483" stroke-width=".8"/></svg>
<div class="t" style="left:27.40px;top:232.51px;font-size:14.000px;color:#485060;font-weight:400;transform:scale(0.5625);">发布中心</div>
<div class="r" style="left:11.00px;top:249.40px;width:98.00px;height:0.80px;background:#f1f2f6;"></div>
<svg class="r" style="left:104px;top:233.45px;" width="4" height="6" viewBox="0 0 4 6"><path d="M.5 .3L3 3 .5 5.7" stroke="#999" stroke-width=".7" fill="none"/></svg>
<div class="t" style="left:27.00px;top:152.22px;font-size:12.000px;color:#1a7cf0;font-weight:700;transform:scale(0.5625);">运维总览</div>
<div class="t" style="left:27.00px;top:168.62px;font-size:12.000px;color:#6a6f78;font-weight:400;transform:scale(0.5625);">任务(流)管理</div>
<div class="t" style="left:27.00px;top:184.72px;font-size:12.000px;color:#6a6f78;font-weight:400;transform:scale(0.5625);">任务运维管理</div>
<svg class="r" style="left:11px;top:595px;" width="9" height="10" viewBox="0 0 9 10"><path d="M0 2.5H8M2.8 5.5H8M0 9H8" stroke="#555" stroke-width=".8" fill="none"/><path d="M2 4.2V6.9L.1 5.55Z" fill="#444"/></svg>
<div class="r" style="left:0.00px;top:0.00px;width:1080.00px;height:1.00px;background:rgba(98,98,106,.64);"></div>
</body>
</html>
